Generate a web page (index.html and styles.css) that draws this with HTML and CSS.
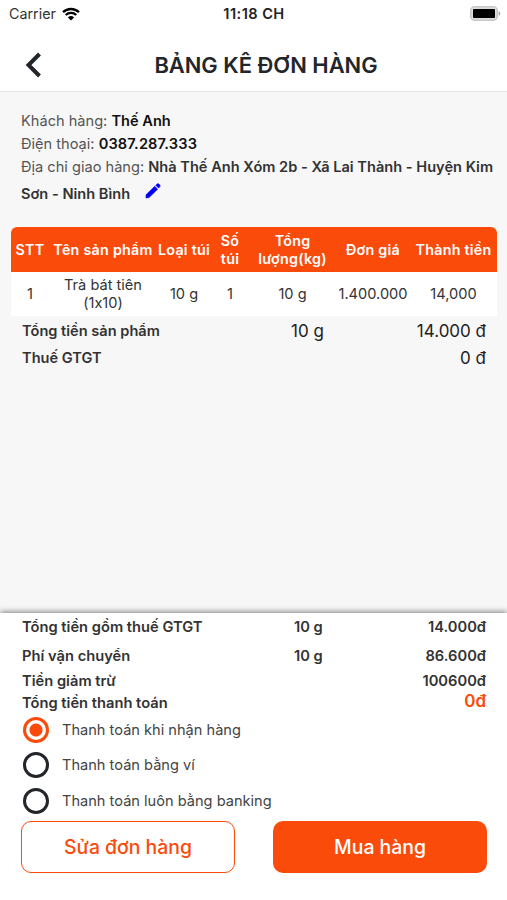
FILE: index.html
```html
<!DOCTYPE html>
<html lang="vi">
<head>
    <meta charset="UTF-8">
    <title>Bảng kê đơn hàng</title>
    <link rel="stylesheet" href="styles.css">
</head>
<body>
<div class="screen">
    <div class="status">
        <div class="carrier">
            <span>Carrier</span>
            <svg class="wifi" viewBox="0 0 18 14" width="18" height="14">
                <path d="M1 5.2A11.6 11.6 0 0 1 17 5.2M3.7 8A7.8 7.8 0 0 1 14.3 8" fill="none" stroke="#000" stroke-width="2.3"/>
                <path d="M9 13.6L5.9 10.5A4.5 4.5 0 0 1 12.1 10.5Z"/>
            </svg>
        </div>
        <div class="time">11:18 CH</div>
        <svg class="battery" viewBox="0 0 31 15" width="31" height="15">
            <rect x=".75" y=".75" width="26.5" height="13.5" rx="3.6" fill="#ddd" stroke="#bbb" stroke-width="1.1"/>
            <rect x="3" y="3" width="22" height="9" rx="1" fill="#000"/>
            <path d="M28.6 5Q30.4 6 30.4 7.5T28.6 10Z" fill="#aaa"/>
        </svg>
    </div>
    <div class="header">
        <svg class="back" viewBox="0 0 16 26" width="16" height="26">
            <path d="M14.5 2L3.5 13L14.5 24" fill="none" stroke="#222529" stroke-width="4"/>
        </svg>
        <h1 class="title">BẢNG KÊ ĐƠN HÀNG</h1>
    </div>
    <div class="content">
        <div class="customer">
            <div class="info">Khách hàng: <b class="dark">Thế Anh</b></div>
            <div class="info">Điện thoại: <b class="dark phone">0387.287.333</b></div>
            <div class="info address">Địa chỉ giao hàng: <b>Nhà Thế Anh Xóm 2b - Xã Lai Thành - Huyện Kim<br>Sơn - Ninh Bình</b><svg class="edit" viewBox="0 0 16 16" width="16" height="16">
                <path d="M1 11.8L9.7 3.3L12.6 6.2L4 14.6L1 15ZM10.8 2.2L12.4.8Q13.1.3 13.8 1L14.9 2.1Q15.5 2.8 14.9 3.6L13.6 5.1Z" fill="#0000f5" stroke="#0000f5" stroke-width=".6"/>
            </svg></div>
        </div>
        <div class="table">
            <div class="row row-head">
                <div>STT</div>
                <div>Tên sản phẩm</div>
                <div>Loại túi</div>
                <div>Số<br>túi</div>
                <div>Tổng<br>lượng(kg)</div>
                <div>Đơn giá</div>
                <div>Thành tiền</div>
            </div>
            <div class="row row-item">
                <div>1</div>
                <div>Trà bát tiên<br>(1x10)</div>
                <div>10 g</div>
                <div>1</div>
                <div>10 g</div>
                <div>1.400.000</div>
                <div>14,000</div>
            </div>
        </div>
        <div class="sum">
            <b>Tổng tiền sản phẩm</b>
            <span class="weight">10 g</span>
            <span class="price">14.000 đ</span>
        </div>
        <div class="sum">
            <b>Thuế GTGT</b>
            <span class="price">0 đ</span>
        </div>
    </div>
    <div class="footer">
        <div class="total total-first">
            <span>Tổng tiền gồm thuế GTGT</span>
            <span class="weight">10 g</span>
            <span class="price">14.000đ</span>
        </div>
        <div class="total total-ship">
            <span>Phí vận chuyển</span>
            <span class="weight">10 g</span>
            <span class="price">86.600đ</span>
        </div>
        <div class="total">
            <span>Tiền giảm trừ</span>
            <span class="price">100600đ</span>
        </div>
        <div class="total total-pay">
            <span>Tổng tiền thanh toán</span>
            <span class="price pay">0đ</span>
        </div>
        <div class="option">
            <div class="radio checked"></div>
            <span>Thanh toán khi nhận hàng</span>
        </div>
        <div class="option">
            <div class="radio"></div>
            <span>Thanh toán bằng ví</span>
        </div>
        <div class="option">
            <div class="radio"></div>
            <span>Thanh toán luôn bằng banking</span>
        </div>
        <div class="buttons">
            <div class="btn btn-edit">Sửa đơn hàng</div>
            <div class="btn btn-buy">Mua hàng</div>
        </div>
    </div>
</div>
</body>
</html>
```
FILE: styles.css
```css
* {
    box-sizing: border-box;
}
body {
    margin: 0;
    font-family: Inter, "Liberation Sans", sans-serif;
    font-feature-settings: "calt" 0;
    font-size: 14.6px;
    color: #333;
    background-color: #fff;
}
b {
    font-weight: 600;
}
.screen {
    display: flex;
    flex-direction: column;
    width: 507px;
    height: 900px;
    overflow: hidden;
}
.status {
    display: grid;
    grid-template-columns: 1fr auto 1fr;
    align-items: center;
    height: 27px;
    padding: 0 6px 0 9px;
}
.carrier {
    display: flex;
    align-items: center;
    gap: 6px;
    font-size: 14.3px;
}
.time {
    font-weight: 600;
    font-size: 14.6px;
    letter-spacing: .45px;
    margin-right: 2px;
    color: #222;
}
.battery {
    justify-self: end;
}
.header {
    display: grid;
    grid-template-columns: 60px 1fr 60px;
    align-items: center;
    height: 65px;
    padding: 11px 0 0 25px;
    border-bottom: 1px solid #e8e8e8;
}
.title {
    margin: 0;
    text-align: center;
    font-size: 21.9px;
    font-weight: 600;
    color: #222529;
}
.content {
    flex: 1;
    background-color: #f7f7f7;
}
.customer {
    padding: 18px 0 0 21px;
    height: 135px;
    color: #555;
    white-space: nowrap;
}
.info {
    line-height: 23px;
}
.info b {
    color: #333;
}
.info .dark {
    color: #111;
}
.info .phone {
    letter-spacing: .15px;
}
.address {
    line-height: 27px;
    margin-top: -2px;
}
.edit {
    margin-left: 15px;
}
.table {
    margin: 0 10px 1px 11px;
    border-radius: 6px 6px 0 0;
    overflow: hidden;
}
.row {
    display: grid;
    grid-template-columns: 38px 108px 54px 38px 87px 74px 87px;
    align-items: center;
    text-align: center;
    line-height: 18px;
    white-space: nowrap;
}
.row > div {
    display: flex;
    justify-content: center;
}
.row-head {
    height: 45px;
    background-color: #fb4b0b;
    color: #fff;
    font-weight: 600;
    font-size: 14.3px;
    letter-spacing: .25px;
}
.row-item {
    height: 44px;
    background-color: #fff;
}
.sum, .total {
    display: grid;
    grid-template-columns: 1fr 34px 161px;
    align-items: center;
    padding: 0 21px 0 22px;
    white-space: nowrap;
}
.sum {
    height: 27px;
}
.sum span {
    font-size: 17px;
    color: #222;
}
.price {
    grid-column: 3;
    text-align: right;
}
.footer {
    height: 287px;
    background-color: #fff;
    box-shadow: 0 -1px 6px rgba(0, 0, 0, .5);
}
.total {
    grid-template-columns: 1fr 34px 158px;
    font-weight: 600;
    font-size: 14.7px;
    height: 22px;
}
.total-first {
    height: 28px;
}
.total-ship {
    height: 29px;
}
.total-pay {
    height: 20px;
}
.total .pay {
    color: #fb4b0b;
    font-size: 17px;
    line-height: 19px;
    padding-bottom: 2px;
}
.option {
    display: flex;
    align-items: center;
    gap: 13px;
    height: 35.5px;
    padding-left: 23px;
    color: #444;
}
.radio {
    width: 26px;
    height: 26px;
    border: 3px solid #222529;
    border-radius: 50%;
}
.checked {
    border-color: #fb4b0b;
    background: radial-gradient(circle, #fb4b0b 6px, #fff 7px);
}
.buttons {
    display: flex;
    justify-content: space-between;
    padding: 2px 20px 0 21px;
}
.btn {
    width: 214px;
    height: 52px;
    line-height: 52px;
    text-align: center;
    font-size: 19.4px;
    border-radius: 10px;
    font-weight: 500;
}
.btn-edit {
    border: 1px solid #fb4b0b;
    line-height: 50px;
    color: #fb4b0b;
}
.btn-buy {
    background-color: #fb4b0b;
    color: #fff;
}
```
